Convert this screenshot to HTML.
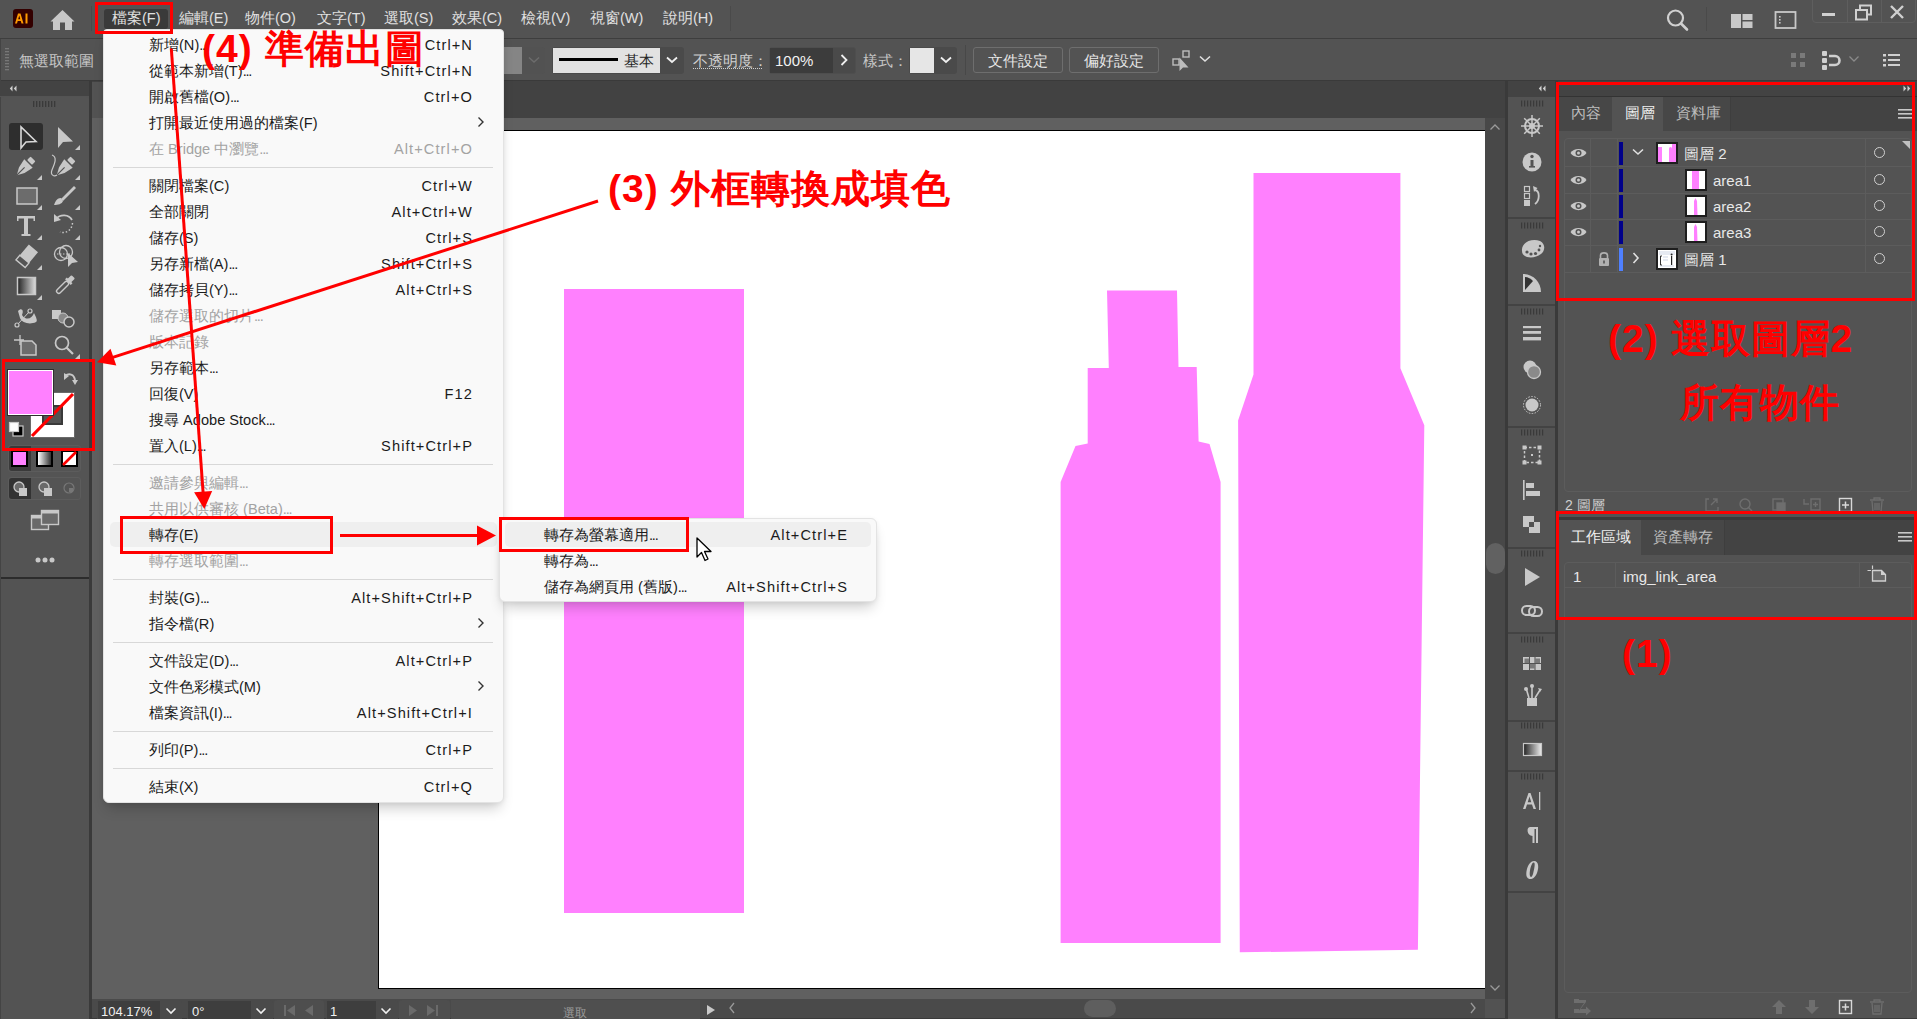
<!DOCTYPE html>
<html><head><meta charset="utf-8">
<style>
*{box-sizing:border-box;margin:0;padding:0}
html,body{width:1917px;height:1019px;overflow:hidden;background:#535353;font-family:"Liberation Sans",sans-serif;color:#d6d6d6}
.a{position:absolute}
.t{position:absolute;white-space:nowrap;line-height:1}
.an{font-size:39px;font-weight:bold;color:#ff0000;line-height:45px;letter-spacing:1px}
.mb{font-size:14.5px;top:10px;line-height:17px;color:#e0e0e0}
.cb{font-size:15px;top:52px;line-height:17px}
.tb{font-size:15px;line-height:17px}
.lr{font-size:15px;line-height:18px;color:#e8e8e8}
.sb{font-size:13px;top:1004px;line-height:16px}
.mi{font-size:14.6px;line-height:26px;letter-spacing:0}
</style></head><body>
<!-- ===== MENU BAR ===== -->
<div class="a" style="left:0;top:0;width:1917px;height:38px;background:#535353"></div>
<div class="a" style="left:0;top:38px;width:1917px;height:1px;background:#3e3e3e"></div>
<div class="a" style="left:13px;top:9px;width:20px;height:19px;background:#330000;border-radius:3px"></div>
<svg class="a" style="left:13px;top:9px" width="20" height="19" viewBox="0 0 20 19"><path d="M5 4.5 L7.5 4.5 L10.5 14.5 L8.5 14.5 L7.8 12 L4.7 12 L4 14.5 L2 14.5 Z M5.2 10.3 L7.3 10.3 L6.25 6.5 Z" fill="#ff9a00"/><rect x="12.5" y="4.5" width="2" height="10" fill="#ff9a00"/></svg>
<svg class="a" style="left:50px;top:9px" width="26" height="22" viewBox="0 0 26 22"><path d="M12.5 1 L24.5 12.5 L22 12.5 L22 21 L15 21 L15 13.5 L10 13.5 L10 21 L3 21 L3 12.5 L0.5 12.5 Z" fill="#c8c8c8"/></svg>
<div class="a" style="left:91px;top:6px;width:1px;height:25px;background:#4a4a4a"></div>
<div class="a" style="left:104px;top:9px;width:64px;height:20px;background:#3a3a3a;border-radius:3px"></div>
<div class="t mb" style="left:112px">檔案(F)</div>
<div class="t mb" style="left:179px">編輯(E)</div>
<div class="t mb" style="left:245px">物件(O)</div>
<div class="t mb" style="left:317px">文字(T)</div>
<div class="t mb" style="left:384px">選取(S)</div>
<div class="t mb" style="left:452px">效果(C)</div>
<div class="t mb" style="left:521px">檢視(V)</div>
<div class="t mb" style="left:590px">視窗(W)</div>
<div class="t mb" style="left:663px">說明(H)</div>
<div class="a" style="left:730px;top:6px;width:1px;height:25px;background:#4a4a4a"></div>
<!-- right icons -->
<svg class="a" style="left:1665px;top:8px" width="26" height="24" viewBox="0 0 26 24"><circle cx="10.5" cy="10" r="7.5" fill="none" stroke="#d0d0d0" stroke-width="2.2"/><line x1="16" y1="15.5" x2="22" y2="21.5" stroke="#d0d0d0" stroke-width="2.6" stroke-linecap="round"/></svg>
<div class="a" style="left:1706px;top:7px;width:1px;height:24px;background:#4a4a4a"></div>
<svg class="a" style="left:1730px;top:12px" width="26" height="18" viewBox="0 0 26 18"><rect x="1" y="2" width="10" height="14" fill="#c8c8c8"/><rect x="12.5" y="2" width="10" height="6" fill="#c8c8c8"/><rect x="12.5" y="9.5" width="10" height="6.5" fill="#c8c8c8"/></svg>
<svg class="a" style="left:1774px;top:10px" width="26" height="20" viewBox="0 0 26 20"><rect x="1.5" y="2" width="20" height="16" fill="none" stroke="#c8c8c8" stroke-width="1.8"/><rect x="5" y="6" width="1.6" height="1.6" fill="#c8c8c8"/><rect x="5" y="9" width="1.6" height="1.6" fill="#c8c8c8"/><rect x="5" y="12" width="1.6" height="1.6" fill="#c8c8c8"/></svg>
<div class="a" style="left:1812px;top:-2px;width:104px;height:25px;border:1px solid #5e5e5e;border-radius:0 0 4px 4px"></div>
<div class="a" style="left:1847px;top:0;width:1px;height:23px;background:#5e5e5e"></div>
<div class="a" style="left:1881px;top:0;width:1px;height:23px;background:#5e5e5e"></div>
<div class="a" style="left:1822px;top:13px;width:13px;height:3px;background:#d0d0d0"></div>
<svg class="a" style="left:1854px;top:4px" width="20" height="18" viewBox="0 0 20 18"><rect x="6" y="1.5" width="11" height="9" fill="none" stroke="#d0d0d0" stroke-width="2"/><rect x="2" y="6" width="11" height="9.5" fill="#535353" stroke="#d0d0d0" stroke-width="2"/></svg>
<svg class="a" style="left:1889px;top:5px" width="16" height="14" viewBox="0 0 16 14"><path d="M2 1 L14 13 M14 1 L2 13" stroke="#d0d0d0" stroke-width="2.4"/></svg>


<!-- ===== CONTROL BAR ===== -->
<div class="a" style="left:0;top:39px;width:1917px;height:42px;background:#535353"></div>
<div class="a" style="left:0;top:80px;width:1917px;height:1px;background:#3a3a3a"></div>
<svg class="a" style="left:4px;top:47px" width="6" height="26" viewBox="0 0 6 26"><g fill="#777"><rect x="1" y="1" width="4" height="1.3"/><rect x="1" y="4" width="4" height="1.3"/><rect x="1" y="7" width="4" height="1.3"/><rect x="1" y="10" width="4" height="1.3"/><rect x="1" y="13" width="4" height="1.3"/><rect x="1" y="16" width="4" height="1.3"/><rect x="1" y="19" width="4" height="1.3"/><rect x="1" y="22" width="4" height="1.3"/></g></svg>
<div class="t cb" style="left:19px;color:#c6c6c6">無選取範圍</div>
<div class="a" style="left:503px;top:47px;width:19px;height:27px;background:#858585"></div>
<div class="a" style="left:522px;top:47px;width:23px;height:27px;background:#525252;border-radius:0 3px 3px 0"></div>
<svg class="a" style="left:527px;top:55px" width="14" height="10" viewBox="0 0 14 10"><path d="M2 2.5 L7 7 L12 2.5" fill="none" stroke="#6c6c6c" stroke-width="1.5"/></svg>
<div class="a" style="left:552px;top:47px;width:132px;height:27px;background:#4a4a4a;border-radius:3px"></div>
<div class="a" style="left:553px;top:48px;width:107px;height:25px;background:#e2e2e2"></div>
<div class="a" style="left:559px;top:58px;width:59px;height:3px;background:#000"></div>
<div class="t cb" style="left:624px;color:#262626">基本</div>
<svg class="a" style="left:665px;top:55px" width="14" height="10" viewBox="0 0 14 10"><path d="M2 2.5 L7 7 L12 2.5" fill="none" stroke="#f0f0f0" stroke-width="1.8"/></svg>
<div class="t cb" style="left:693px;color:#d0d0d0">不透明度：</div>
<div class="a" style="left:693px;top:68px;width:69px;height:0;border-top:1px dotted #d0d0d0"></div>
<div class="a" style="left:769px;top:47px;width:87px;height:27px;background:#4a4a4a;border:1px solid #4e4e4e;border-radius:3px"></div>
<div class="a" style="left:770px;top:48px;width:63px;height:25px;background:#3c3c3c"></div>
<div class="t cb" style="left:775px;color:#f2f2f2">100%</div>
<svg class="a" style="left:838px;top:53px" width="12" height="14" viewBox="0 0 12 14"><path d="M3.5 2 L8.5 7 L3.5 12" fill="none" stroke="#f0f0f0" stroke-width="1.8"/></svg>
<div class="t cb" style="left:863px;color:#c6c6c6">樣式：</div>
<div class="a" style="left:909px;top:47px;width:48px;height:27px;background:#4a4a4a;border-radius:3px"></div>
<div class="a" style="left:910px;top:48px;width:24px;height:25px;background:#e6e6e6"></div>
<svg class="a" style="left:939px;top:55px" width="14" height="10" viewBox="0 0 14 10"><path d="M2 2.5 L7 7 L12 2.5" fill="none" stroke="#f0f0f0" stroke-width="1.8"/></svg>
<div class="a" style="left:965px;top:45px;width:1px;height:30px;background:#484848"></div>
<div class="a" style="left:973px;top:47px;width:90px;height:26px;border:1px solid #6e6e6e;border-radius:3px"></div>
<div class="t cb" style="left:988px;color:#e6e6e6">文件設定</div>
<div class="a" style="left:1069px;top:47px;width:90px;height:26px;border:1px solid #6e6e6e;border-radius:3px"></div>
<div class="t cb" style="left:1084px;color:#e6e6e6">偏好設定</div>
<svg class="a" style="left:1171px;top:49px" width="24" height="24" viewBox="0 0 24 24"><g fill="none" stroke="#bdbdbd" stroke-width="1.4"><rect x="2" y="10" width="6" height="6"/><rect x="12" y="2" width="6" height="6"/></g><path d="M8.5 8.5 L8.5 22 L12 18.5 L17.5 18.5 Z" fill="#bdbdbd"/></svg>
<svg class="a" style="left:1198px;top:54px" width="14" height="10" viewBox="0 0 14 10"><path d="M2 2.5 L7 7 L12 2.5" fill="none" stroke="#e0e0e0" stroke-width="1.6"/></svg>
<!-- right side -->
<svg class="a" style="left:1789px;top:51px" width="20" height="20" viewBox="0 0 20 20"><g fill="#7a7a7a"><rect x="2" y="2" width="5" height="5"/><rect x="11" y="2" width="5" height="5"/><rect x="2" y="11" width="5" height="5"/><rect x="11" y="11" width="5" height="5"/></g></svg>
<svg class="a" style="left:1821px;top:50px" width="24" height="22" viewBox="0 0 24 22"><g fill="#d0d0d0"><rect x="1" y="1" width="5" height="5" rx="1"/><rect x="1" y="8" width="5" height="5" rx="1"/><rect x="1" y="15" width="5" height="5" rx="1"/></g><path d="M8 6 L14 6 A4.5 4.5 0 0 1 14 15 L8 15" fill="none" stroke="#d0d0d0" stroke-width="2.6"/></svg>
<svg class="a" style="left:1848px;top:55px" width="12" height="8" viewBox="0 0 12 8"><path d="M1.5 1.5 L6 6 L10.5 1.5" fill="none" stroke="#8a8a8a" stroke-width="1.3"/></svg>
<svg class="a" style="left:1881px;top:52px" width="20" height="16" viewBox="0 0 20 16"><g fill="#d0d0d0"><rect x="2" y="2" width="3" height="2.5"/><rect x="7" y="2" width="12" height="2"/><rect x="2" y="7" width="3" height="2.5"/><rect x="7" y="7" width="12" height="2"/><rect x="2" y="12" width="3" height="2.5"/><rect x="7" y="12" width="12" height="2"/></g></svg>


<!-- ===== LEFT TOOLBAR ===== -->
<div class="a" style="left:0;top:81px;width:89px;height:938px;background:#535353"></div>
<div class="a" style="left:0;top:81px;width:89px;height:15px;background:#434343"></div>
<div class="a" style="left:89px;top:81px;width:3px;height:938px;background:#3a3a3a"></div>
<svg class="a" style="left:9px;top:85px" width="8" height="7" viewBox="0 0 8 7"><path d="M3.5 0.5 L0.8 3.5 L3.5 6.5 Z M7.5 0.5 L4.8 3.5 L7.5 6.5 Z" fill="#d0d0d0"/></svg>
<div class="a" style="left:1px;top:97px;width:88px;height:482px;background:#545454;border-radius:3px 3px 0 0;border-bottom:2px solid #2c2c2c"></div>
<div class="a" style="left:0;top:97px;width:1px;height:922px;background:#444"></div>
<svg class="a" style="left:32px;top:100px" width="26" height="8" viewBox="0 0 26 8"><g fill="#3a3a3a"><rect x="1" y="1" width="1.3" height="6"/><rect x="4" y="1" width="1.3" height="6"/><rect x="7" y="1" width="1.3" height="6"/><rect x="10" y="1" width="1.3" height="6"/><rect x="13" y="1" width="1.3" height="6"/><rect x="16" y="1" width="1.3" height="6"/><rect x="19" y="1" width="1.3" height="6"/><rect x="22" y="1" width="1.3" height="6"/></g></svg>
<div class="a" style="left:9px;top:123px;width:34px;height:27px;background:#2e2e2e;border-radius:3px"></div>
<svg class="a" style="left:0;top:115px" width="90" height="250" viewBox="0 0 90 250">
<g fill="#c8c8c8" stroke="none" transform="translate(0,-2)">
<!-- corner triangles -->
<path d="M80 32 L80 37 L75 37 Z"/><path d="M42 62 L42 67 L37 67 Z"/><path d="M80 62 L80 67 L75 67 Z"/>
<path d="M42 92 L42 97 L37 97 Z"/><path d="M80 92 L80 97 L75 97 Z"/><path d="M42 122 L42 127 L37 127 Z"/><path d="M80 122 L80 127 L75 127 Z"/>
<path d="M42 152 L42 157 L37 157 Z"/><path d="M42 182 L42 187 L37 187 Z"/><path d="M80 241 L80 246 L75 246 Z"/>
</g>
<!-- selection tool outline arrow -->
<path d="M21 12 L21 33 L26 27 L36 26.5 Z" fill="none" stroke="#d8d8d8" stroke-width="1.6" stroke-linejoin="miter"/>
<!-- direct selection filled -->
<path d="M58 12 L58 33 L63 27 L73 26.5 Z" fill="#c8c8c8"/>
<!-- pen -->
<g transform="translate(26,51) rotate(45)"><rect x="-3.5" y="-10" width="7" height="5" rx="1" fill="#c8c8c8"/><path d="M-6 -3.5 L6 -3.5 L4 6 L0 13 L-4 6 Z" fill="#c8c8c8"/><path d="M0 13 L0 2" stroke="#535353" stroke-width="1.2"/></g>
<!-- curvature pen -->
<g transform="translate(66,51) rotate(45)"><rect x="-3.5" y="-10" width="7" height="5" rx="1" fill="#c8c8c8"/><path d="M-6 -3.5 L6 -3.5 L4 6 L0 13 L-4 6 Z" fill="#c8c8c8"/><path d="M0 13 L0 2" stroke="#535353" stroke-width="1.2"/></g>
<path d="M52 40 C58 42 54 50 52 55 C50 60 54 62 57 60" fill="none" stroke="#c8c8c8" stroke-width="1.2"/>
<!-- rectangle -->
<rect x="17" y="73" width="20" height="16" fill="#6c6c6c" stroke="#c8c8c8" stroke-width="1.5"/>
<!-- brush -->
<path d="M74 71 L76 73 L63 86 L61 84 Z" fill="#c8c8c8"/><path d="M61 83 C56 83 55 88 54 90 C58 90 62 89 63 86 Z" fill="#c8c8c8"/>
<!-- type T -->
<path d="M17 101 L35 101 L35 106 L33.5 106 L33.5 103.5 L28 103.5 L28 119 L30.5 119 L30.5 121 L21.5 121 L21.5 119 L24 119 L24 103.5 L18.5 103.5 L18.5 106 L17 106 Z" fill="#c8c8c8"/>
<!-- rotate -->
<path d="M56 104 C60 99 69 99 72 105" fill="none" stroke="#c8c8c8" stroke-width="1.8"/><path d="M54 99 L54 107 L61 105 Z" fill="#c8c8c8"/>
<path d="M72.5 108 C72 115 66 119 60 117" fill="none" stroke="#c8c8c8" stroke-width="1.5" stroke-dasharray="1.5 2"/>
<!-- eraser -->
<g transform="translate(27,141) rotate(40)"><rect x="-6" y="-10" width="12" height="14" fill="#c8c8c8"/><rect x="-6" y="4" width="12" height="6" fill="none" stroke="#c8c8c8" stroke-width="1.4"/></g>
<!-- shape builder -->
<circle cx="61" cy="139" r="6.5" fill="none" stroke="#c8c8c8" stroke-width="1.3"/><circle cx="66" cy="137" r="6.5" fill="none" stroke="#c8c8c8" stroke-width="1.3"/><path d="M57 139 L70 139" stroke="#c8c8c8" stroke-width="1" stroke-dasharray="1.5 1.5"/><path d="M68 138 L68 152 L72 148 L78 147 Z" fill="#c8c8c8"/>
<!-- gradient -->
<defs><linearGradient id="gr" x1="0" x2="1"><stop offset="0" stop-color="#222"/><stop offset="1" stop-color="#ddd"/></linearGradient></defs>
<rect x="17.5" y="162.5" width="18" height="17" fill="url(#gr)" stroke="#c8c8c8" stroke-width="1.5"/>
<!-- eyedropper -->
<g transform="translate(64,171) rotate(45)"><rect x="-2.5" y="-13" width="5" height="6" rx="1" fill="#c8c8c8"/><rect x="-4" y="-8" width="8" height="2.5" fill="#c8c8c8"/><rect x="-2.2" y="-5.5" width="4.4" height="15" rx="2" fill="none" stroke="#c8c8c8" stroke-width="1.4"/></g>
<!-- puppet warp -->
<path d="M18 196 C22 192 24 196 22 200 C26 206 32 204 34 198 C36 202 38 206 36 207 C30 210 22 208 20 203 Z" fill="#c8c8c8"/><circle cx="17" cy="210" r="2" fill="none" stroke="#c8c8c8" stroke-width="1.2"/><circle cx="30" cy="196" r="2" fill="none" stroke="#c8c8c8" stroke-width="1.2"/><path d="M18 209 L29 197" stroke="#c8c8c8" stroke-width="1"/>
<!-- blend/symbols -->
<rect x="52" y="195" width="9" height="9" fill="#c8c8c8"/><circle cx="63" cy="203" r="5" fill="#8a8a8a" stroke="#c8c8c8" stroke-width="1"/><circle cx="69" cy="207" r="5" fill="#535353" stroke="#c8c8c8" stroke-width="1.5"/>
<!-- artboard -->
<path d="M14 225 L24 225 M20 220 L20 230" stroke="#c8c8c8" stroke-width="1.3"/><path d="M21 226 L32 226 L36 230 L36 240 L21 240 Z" fill="#6c6c6c" stroke="#c8c8c8" stroke-width="1.5"/>
<!-- zoom -->
<circle cx="62" cy="228" r="6.5" fill="none" stroke="#c8c8c8" stroke-width="1.7"/><path d="M66.5 232.5 L73 239" stroke="#c8c8c8" stroke-width="2.2"/>
</g>
</svg>
<!-- fill / stroke -->
<div class="a" style="left:30px;top:392px;width:45px;height:46px;background:#fff;border:1px solid #6a6a6a"></div>
<div class="a" style="left:42px;top:405px;width:21px;height:20px;background:#535353;border:2px solid #3a3a3a"></div>
<svg class="a" style="left:30px;top:392px" width="45" height="46" viewBox="0 0 45 46"><path d="M2 44 L43 2" stroke="#ff0000" stroke-width="3.2"/></svg>
<div class="a" style="left:8px;top:370px;width:45px;height:45px;background:#ff80ff;border:1px solid #fff;outline:1px solid #2e2e2e"></div>
<svg class="a" style="left:63px;top:371px" width="16" height="16" viewBox="0 0 16 16"><path d="M2 5 C6 2 11 3 12 9" fill="none" stroke="#c8c8c8" stroke-width="2"/><path d="M1 2 L1 9 L6 5 Z" fill="#c8c8c8"/><path d="M9 9 L15 9 L12 14 Z" fill="#c8c8c8"/></svg>
<svg class="a" style="left:8px;top:421px" width="17" height="17" viewBox="0 0 17 17"><rect x="5" y="5" width="10" height="10" fill="#000" stroke="#c8c8c8" stroke-width="1.2"/><rect x="1.5" y="1.5" width="9" height="9" fill="#fff" stroke="#c8c8c8" stroke-width="1.2"/></svg>
<div class="a" style="left:8px;top:445px;width:73px;height:27px;border:1px solid #5c5c5c;border-radius:3px"></div>
<div class="a" style="left:9px;top:446px;width:22px;height:25px;background:#3a3a3a;border-radius:3px 0 0 3px"></div>
<div class="a" style="left:11px;top:450px;width:17px;height:17px;background:#ff80ff;border:2px solid #000"></div>
<div class="a" style="left:36px;top:450px;width:17px;height:17px;background:linear-gradient(90deg,#fff,#333);border:2px solid #000"></div>
<div class="a" style="left:61px;top:450px;width:17px;height:17px;background:#fff;border:2px solid #000"></div>
<svg class="a" style="left:61px;top:450px" width="17" height="17" viewBox="0 0 17 17"><path d="M2 15 L15 2" stroke="#ff0000" stroke-width="2.6"/></svg>
<div class="a" style="left:8px;top:477px;width:73px;height:23px;border:1px solid #5c5c5c;border-radius:3px"></div>
<div class="a" style="left:9px;top:478px;width:22px;height:21px;background:#333;border-radius:3px 0 0 3px"></div>
<svg class="a" style="left:0;top:476px" width="90" height="26" viewBox="0 0 90 26">
<circle cx="19" cy="11" r="5" fill="#6a6a6a" stroke="#c8c8c8" stroke-width="1.3"/><rect x="19" y="12" width="8" height="8" fill="#c8c8c8"/>
<circle cx="44" cy="11" r="5" fill="#6a6a6a" stroke="#c8c8c8" stroke-width="1.3"/><rect x="44" y="12" width="8" height="8" fill="#c8c8c8"/>
<circle cx="69" cy="12" r="5" fill="none" stroke="#777" stroke-width="1.2"/><rect x="69" y="12" width="4" height="4" fill="#777"/>
</svg>
<svg class="a" style="left:30px;top:509px" width="30" height="24" viewBox="0 0 30 24"><rect x="1.5" y="6.5" width="17" height="14" fill="#6a6a6a" stroke="#c8c8c8" stroke-width="1.4"/><rect x="1.5" y="6.5" width="17" height="3" fill="#c8c8c8"/><rect x="11.5" y="1.5" width="17" height="14" fill="#6a6a6a" stroke="#c8c8c8" stroke-width="1.4"/><rect x="11.5" y="1.5" width="17" height="3" fill="#c8c8c8"/></svg>
<svg class="a" style="left:34px;top:556px" width="22" height="8" viewBox="0 0 22 8"><circle cx="4" cy="4" r="2.5" fill="#c8c8c8"/><circle cx="11" cy="4" r="2.5" fill="#c8c8c8"/><circle cx="18" cy="4" r="2.5" fill="#c8c8c8"/></svg>


<!-- ===== DOC AREA ===== -->
<div class="a" style="left:92px;top:81px;width:1413px;height:37px;background:#424242"></div>
<div class="a" style="left:92px;top:82px;width:30px;height:36px;background:#535353"></div>
<div class="a" style="left:0;top:39px;width:1px;height:42px;background:#444"></div>
<div class="a" style="left:92px;top:118px;width:1393px;height:881px;background:#606060"></div>
<div class="a" style="left:378px;top:130px;width:1108px;height:859px;background:#fff;border:1px solid #000;border-right:none"></div>
<svg class="a" style="left:0;top:0" width="1917" height="1019" viewBox="0 0 1917 1019">
<rect x="564" y="289" width="180" height="624" fill="#ff80fe"/>
<polygon fill="#ff80fe" points="1107,290.6 1177,290.6 1178.5,367 1196.7,367 1198.6,441.6 1209.5,444 1220.6,482 1220.6,943 1060.6,943 1060.6,482 1075.5,446 1087.7,443.5 1087.7,368 1108.8,368"/>
<polygon fill="#ff80fe" points="1253.5,173 1400.4,173 1400.4,368.2 1424.3,425.3 1417.9,949.8 1239.8,952.3 1238.1,420.6 1253.5,374.4"/>
</svg>

<!-- vertical scrollbar -->
<div class="a" style="left:1485px;top:118px;width:20px;height:881px;background:#484848"></div>
<!-- status bar -->
<div class="a" style="left:92px;top:999px;width:1413px;height:20px;background:#4a4a4a"></div>
<div class="a" style="left:1486px;top:543px;width:19px;height:31px;background:#616161;border-radius:10px"></div>
<svg class="a" style="left:1488px;top:122px" width="14" height="10" viewBox="0 0 14 10"><path d="M2.5 7.5 L7 3 L11.5 7.5" fill="none" stroke="#9a9a9a" stroke-width="1.3"/></svg>
<svg class="a" style="left:1488px;top:983px" width="14" height="10" viewBox="0 0 14 10"><path d="M2.5 2.5 L7 7 L11.5 2.5" fill="none" stroke="#9a9a9a" stroke-width="1.3"/></svg>
<div class="a" style="left:1485px;top:999px;width:20px;height:19px;background:#525252"></div>
<div class="a" style="left:92px;top:1018px;width:1413px;height:1px;background:#3a3a3a"></div>
<div class="a" style="left:97px;top:1000px;width:85px;height:19px;background:#4a4a4a;border-radius:3px 3px 0 0"></div>
<div class="a" style="left:98px;top:1001px;width:62px;height:18px;background:#3e3e3e"></div>
<div class="t sb" style="left:101px;color:#f0f0f0">104.17%</div>
<svg class="a" style="left:164px;top:1006px" width="14" height="10" viewBox="0 0 14 10"><path d="M2.5 2.5 L7 7 L11.5 2.5" fill="none" stroke="#f0f0f0" stroke-width="1.6"/></svg>
<div class="a" style="left:187px;top:1000px;width:86px;height:19px;background:#4a4a4a;border-radius:3px 3px 0 0"></div>
<div class="a" style="left:188px;top:1001px;width:63px;height:18px;background:#3e3e3e"></div>
<div class="t sb" style="left:192px;color:#f0f0f0">0°</div>
<svg class="a" style="left:254px;top:1006px" width="14" height="10" viewBox="0 0 14 10"><path d="M2.5 2.5 L7 7 L11.5 2.5" fill="none" stroke="#f0f0f0" stroke-width="1.6"/></svg>
<div class="a" style="left:274px;top:1000px;width:50px;height:19px;background:#4e4e4e;border-radius:3px 3px 0 0"></div>
<svg class="a" style="left:282px;top:1003px" width="40" height="14" viewBox="0 0 40 14"><g fill="#6a6a6a"><rect x="2" y="2" width="2" height="11"/><path d="M13 2 L5 7.5 L13 13 Z"/><path d="M31 2 L23 7.5 L31 13 Z"/></g></svg>
<div class="a" style="left:326px;top:1000px;width:72px;height:19px;background:#4a4a4a;border-radius:3px 3px 0 0"></div>
<div class="a" style="left:327px;top:1001px;width:49px;height:18px;background:#3e3e3e"></div>
<div class="t sb" style="left:330px;color:#f0f0f0">1</div>
<svg class="a" style="left:379px;top:1006px" width="14" height="10" viewBox="0 0 14 10"><path d="M2.5 2.5 L7 7 L11.5 2.5" fill="none" stroke="#f0f0f0" stroke-width="1.6"/></svg>
<div class="a" style="left:399px;top:1000px;width:51px;height:19px;background:#4e4e4e;border-radius:3px 3px 0 0"></div>
<svg class="a" style="left:406px;top:1003px" width="40" height="14" viewBox="0 0 40 14"><g fill="#6a6a6a"><path d="M3 2 L11 7.5 L3 13 Z"/><path d="M21 2 L29 7.5 L21 13 Z"/><rect x="30" y="2" width="2" height="11"/></g></svg>
<div class="a" style="left:451px;top:1000px;width:249px;height:19px;background:#4f4f4f"></div>
<div class="t sb" style="left:563px;color:#9a9a9a;font-size:12px;top:1005px">選取</div>
<svg class="a" style="left:704px;top:1003px" width="14" height="14" viewBox="0 0 14 14"><path d="M3 2 L11 7 L3 12 Z" fill="#c8c8c8"/></svg>
<svg class="a" style="left:726px;top:1001px" width="12" height="14" viewBox="0 0 12 14"><path d="M8 2 L4 7 L8 12" fill="none" stroke="#9a9a9a" stroke-width="1.3"/></svg>
<div class="a" style="left:1084px;top:1000px;width:32px;height:17px;background:#5e5e5e;border-radius:9px"></div>
<svg class="a" style="left:1467px;top:1001px" width="12" height="14" viewBox="0 0 12 14"><path d="M4 2 L8 7 L4 12" fill="none" stroke="#9a9a9a" stroke-width="1.3"/></svg>


<!-- ===== RIGHT ICON COLUMN ===== -->
<div class="a" style="left:1505px;top:81px;width:3px;height:938px;background:#3a3a3a"></div>
<div class="a" style="left:1508px;top:81px;width:48px;height:938px;background:#535353"></div>
<div class="a" style="left:1508px;top:81px;width:48px;height:16px;background:#434343"></div>


<!-- ===== RIGHT PANELS ===== -->
<div class="a" style="left:1556px;top:81px;width:361px;height:938px;background:#535353"></div>
<div class="a" style="left:1556px;top:81px;width:361px;height:16px;background:#434343"></div>
<svg class="a" style="left:1538px;top:85px" width="8" height="7" viewBox="0 0 8 7"><path d="M3.5 0.5 L0.8 3.5 L3.5 6.5 Z M7.5 0.5 L4.8 3.5 L7.5 6.5 Z" fill="#d0d0d0"/></svg>
<div class="a" style="left:1508px;top:97px;width:47px;height:795px;background:#535353"></div>
<div class="a" style="left:1508px;top:217px;width:47px;height:2px;background:#434343"></div>
<div class="a" style="left:1508px;top:304px;width:47px;height:2px;background:#434343"></div>
<div class="a" style="left:1508px;top:426px;width:47px;height:2px;background:#434343"></div>
<div class="a" style="left:1508px;top:547px;width:47px;height:2px;background:#434343"></div>
<div class="a" style="left:1508px;top:632px;width:47px;height:2px;background:#434343"></div>
<div class="a" style="left:1508px;top:720px;width:47px;height:2px;background:#434343"></div>
<div class="a" style="left:1508px;top:770px;width:47px;height:2px;background:#434343"></div>
<div class="a" style="left:1508px;top:891px;width:47px;height:2px;background:#434343"></div>
<svg class="a" style="left:1520px;top:100px" width="24" height="7" viewBox="0 0 24 7"><g fill="#3a3a3a"><rect x="1" y="0.5" width="1.2" height="6"/><rect x="4" y="0.5" width="1.2" height="6"/><rect x="7" y="0.5" width="1.2" height="6"/><rect x="10" y="0.5" width="1.2" height="6"/><rect x="13" y="0.5" width="1.2" height="6"/><rect x="16" y="0.5" width="1.2" height="6"/><rect x="19" y="0.5" width="1.2" height="6"/><rect x="22" y="0.5" width="1.2" height="6"/></g></svg>
<svg class="a" style="left:1520px;top:222px" width="24" height="7" viewBox="0 0 24 7"><g fill="#3a3a3a"><rect x="1" y="0.5" width="1.2" height="6"/><rect x="4" y="0.5" width="1.2" height="6"/><rect x="7" y="0.5" width="1.2" height="6"/><rect x="10" y="0.5" width="1.2" height="6"/><rect x="13" y="0.5" width="1.2" height="6"/><rect x="16" y="0.5" width="1.2" height="6"/><rect x="19" y="0.5" width="1.2" height="6"/><rect x="22" y="0.5" width="1.2" height="6"/></g></svg>
<svg class="a" style="left:1520px;top:308px" width="24" height="7" viewBox="0 0 24 7"><g fill="#3a3a3a"><rect x="1" y="0.5" width="1.2" height="6"/><rect x="4" y="0.5" width="1.2" height="6"/><rect x="7" y="0.5" width="1.2" height="6"/><rect x="10" y="0.5" width="1.2" height="6"/><rect x="13" y="0.5" width="1.2" height="6"/><rect x="16" y="0.5" width="1.2" height="6"/><rect x="19" y="0.5" width="1.2" height="6"/><rect x="22" y="0.5" width="1.2" height="6"/></g></svg>
<svg class="a" style="left:1520px;top:429px" width="24" height="7" viewBox="0 0 24 7"><g fill="#3a3a3a"><rect x="1" y="0.5" width="1.2" height="6"/><rect x="4" y="0.5" width="1.2" height="6"/><rect x="7" y="0.5" width="1.2" height="6"/><rect x="10" y="0.5" width="1.2" height="6"/><rect x="13" y="0.5" width="1.2" height="6"/><rect x="16" y="0.5" width="1.2" height="6"/><rect x="19" y="0.5" width="1.2" height="6"/><rect x="22" y="0.5" width="1.2" height="6"/></g></svg>
<svg class="a" style="left:1520px;top:550px" width="24" height="7" viewBox="0 0 24 7"><g fill="#3a3a3a"><rect x="1" y="0.5" width="1.2" height="6"/><rect x="4" y="0.5" width="1.2" height="6"/><rect x="7" y="0.5" width="1.2" height="6"/><rect x="10" y="0.5" width="1.2" height="6"/><rect x="13" y="0.5" width="1.2" height="6"/><rect x="16" y="0.5" width="1.2" height="6"/><rect x="19" y="0.5" width="1.2" height="6"/><rect x="22" y="0.5" width="1.2" height="6"/></g></svg>
<svg class="a" style="left:1520px;top:636px" width="24" height="7" viewBox="0 0 24 7"><g fill="#3a3a3a"><rect x="1" y="0.5" width="1.2" height="6"/><rect x="4" y="0.5" width="1.2" height="6"/><rect x="7" y="0.5" width="1.2" height="6"/><rect x="10" y="0.5" width="1.2" height="6"/><rect x="13" y="0.5" width="1.2" height="6"/><rect x="16" y="0.5" width="1.2" height="6"/><rect x="19" y="0.5" width="1.2" height="6"/><rect x="22" y="0.5" width="1.2" height="6"/></g></svg>
<svg class="a" style="left:1520px;top:722px" width="24" height="7" viewBox="0 0 24 7"><g fill="#3a3a3a"><rect x="1" y="0.5" width="1.2" height="6"/><rect x="4" y="0.5" width="1.2" height="6"/><rect x="7" y="0.5" width="1.2" height="6"/><rect x="10" y="0.5" width="1.2" height="6"/><rect x="13" y="0.5" width="1.2" height="6"/><rect x="16" y="0.5" width="1.2" height="6"/><rect x="19" y="0.5" width="1.2" height="6"/><rect x="22" y="0.5" width="1.2" height="6"/></g></svg>
<svg class="a" style="left:1520px;top:773px" width="24" height="7" viewBox="0 0 24 7"><g fill="#3a3a3a"><rect x="1" y="0.5" width="1.2" height="6"/><rect x="4" y="0.5" width="1.2" height="6"/><rect x="7" y="0.5" width="1.2" height="6"/><rect x="10" y="0.5" width="1.2" height="6"/><rect x="13" y="0.5" width="1.2" height="6"/><rect x="16" y="0.5" width="1.2" height="6"/><rect x="19" y="0.5" width="1.2" height="6"/><rect x="22" y="0.5" width="1.2" height="6"/></g></svg>
<svg class="a" style="left:1508px;top:97px" width="47" height="795" viewBox="0 97 47 795">
<g fill="#c8c8c8" stroke="#c8c8c8">
<!-- helm 126 -->
<g transform="translate(24,126)" fill="none" stroke-width="2"><circle r="7"/><circle r="2" fill="#c8c8c8"/><path d="M0 -11 L0 11 M-11 0 L11 0 M-7.8 -7.8 L7.8 7.8 M-7.8 7.8 L7.8 -7.8" stroke-width="1.5"/></g>
<!-- info 162 -->
<circle cx="24" cy="162" r="9.5" stroke="none"/><rect x="22.5" y="160" width="3" height="7" fill="#535353" stroke="none"/><circle cx="24" cy="156.5" r="1.7" fill="#535353" stroke="none"/><rect x="21" y="166" width="6" height="1.6" fill="#535353" stroke="none"/>
<!-- history 196 -->
<g stroke-width="1.2" fill="none"><rect x="16.5" y="186.5" width="5" height="5"/><rect x="16.5" y="193.5" width="5" height="5"/></g><rect x="16" y="200" width="6" height="6" stroke="none"/>
<path d="M27 190 C32 191 32 200 27 204" fill="none" stroke-width="1.8"/><path d="M25 186 L29.5 188 L26 192 Z" stroke="none"/>
<!-- palette 249 -->
<path d="M14 251 C13 242 24 238 32 241 C38 244 37 251 33 254 C29 257 24 258 19 257 C16 256 14 254 14 251 Z" stroke="none"/>
<g fill="#535353" stroke="none"><circle cx="19" cy="252" r="1.6"/><circle cx="23" cy="254" r="1.6"/><circle cx="27.5" cy="253.5" r="1.6"/><circle cx="31" cy="250" r="1.4"/><circle cx="32" cy="246" r="1.2"/></g>
<!-- color guide 283 -->
<path d="M15 274 L15 292 L33 292 C33 282 25 274 15 274 Z" stroke="none"/>
<path d="M17 290 L17 277 C20 277 23 279 25 281 Z" fill="#333" stroke="none"/>
<!-- stroke 333 -->
<g stroke="none"><rect x="15" y="326" width="18" height="2.2"/><rect x="15" y="331" width="18" height="2.8"/><rect x="15" y="337" width="18" height="3.4"/></g>
<!-- transparency 370 -->
<circle cx="22" cy="367" r="6.5" stroke="none"/><circle cx="26" cy="372" r="6.5" fill="#8a8a8a" stroke="#c8c8c8" stroke-width="1.3"/>
<!-- appearance 405 -->
<circle cx="24" cy="405" r="8.5" fill="none" stroke-width="1" stroke-dasharray="1.6 1.4"/><circle cx="24" cy="405" r="6.5" stroke="none"/>
<!-- transform 455 -->
<rect x="16.5" y="447.5" width="15" height="15" fill="none" stroke-width="1.5" stroke-dasharray="2.5 2"/><g stroke="none"><rect x="14.5" y="445.5" width="4" height="4"/><rect x="29.5" y="445.5" width="4" height="4"/><rect x="14.5" y="460.5" width="4" height="4"/><rect x="29.5" y="460.5" width="4" height="4"/><rect x="23" y="454" width="2" height="2"/></g>
<!-- align 490 -->
<g stroke="none"><rect x="15" y="480" width="1.6" height="20"/><rect x="18" y="483" width="8" height="5"/><rect x="18" y="491" width="14" height="5"/></g>
<!-- pathfinder 525 -->
<g stroke="none"><rect x="15" y="516" width="11" height="11"/><rect x="21" y="522" width="11" height="11"/></g><rect x="21" y="522" width="5" height="5" fill="#535353" stroke="none"/>
<!-- play 577 -->
<path d="M17 568 L32 577 L17 586 Z" stroke="none"/>
<!-- link 611 -->
<g fill="none" stroke-width="2"><rect x="14" y="606" width="13" height="9" rx="4.5"/><rect x="21" y="607" width="13" height="9" rx="4.5"/></g>
<!-- swatches 663 -->
<g stroke="none"><rect x="15" y="657" width="18" height="13"/></g><g fill="#7a7a7a" stroke="none"><rect x="16.5" y="658.5" width="4.5" height="4.5"/><rect x="22" y="664" width="4.5" height="4.5"/><rect x="27.5" y="658.5" width="4.5" height="4.5"/></g><path d="M15 663.5 L33 663.5 M21.5 657 L21.5 670 M27 657 L27 670" stroke="#535353" stroke-width="1"/>
<!-- brushes 698 -->
<rect x="19" y="698" width="10" height="8" stroke="none"/><path d="M21 698 L18 688 M24 698 L24 685 M27 698 L32 690" stroke-width="1.6"/><circle cx="18" cy="689" r="2" stroke="none"/><circle cx="24" cy="686" r="2" stroke="none"/><path d="M30 688 L34 689 L32 692 Z" stroke="none"/>
<!-- gradient 749 -->
<defs><linearGradient id="g2" x1="0" x2="1"><stop offset="0" stop-color="#222"/><stop offset="1" stop-color="#eee"/></linearGradient></defs>
<rect x="15.5" y="743.5" width="18" height="12" fill="url(#g2)" stroke-width="1.2"/>
<!-- A| 801 -->
<path d="M15 809 L20.5 793 L22.5 793 L28 809 L25.5 809 L24 804.5 L19 804.5 L17.5 809 Z M19.7 802.3 L23.3 802.3 L21.5 796.5 Z" stroke="none"/><rect x="31" y="792" width="1.3" height="18" stroke="none"/>
<!-- pilcrow 835 -->
<path d="M22 827 L30 827 L30 843 L28 843 L28 829 L26.5 829 L26.5 843 L24.5 843 L24.5 836 C19 836 18 827 22 827 Z" stroke="none"/>
<!-- O italic 870 -->
<path d="M26 861 C31 861 31 868 29 873 C27 879 21 881 19 877 C17 873 20 861 26 861 Z M25.5 862.5 C23 863 21 873 22 876 C23 878 24 877 25 874 C26 870 28 862 25.5 862.5 Z" fill-rule="evenodd" stroke="none"/>
</g></svg>
<div class="a" style="left:1555px;top:81px;width:3px;height:938px;background:#3a3a3a"></div>
<svg class="a" style="left:1903px;top:85px" width="8" height="7" viewBox="0 0 8 7"><path d="M0.5 0.5 L3.2 3.5 L0.5 6.5 Z M4.5 0.5 L7.2 3.5 L4.5 6.5 Z" fill="#d0d0d0"/></svg>
<div class="a" style="left:1558px;top:96px;width:359px;height:1px;background:#333"></div>
<div class="a" style="left:1558px;top:97px;width:359px;height:34px;background:#434343"></div>
<div class="a" style="left:1558px;top:97px;width:54px;height:34px;background:#474747"></div>
<div class="a" style="left:1612px;top:97px;width:51px;height:34px;background:#535353"></div>
<div class="a" style="left:1663px;top:97px;width:68px;height:34px;background:#474747;border-right:1px solid #3e3e3e"></div>
<div class="t tb" style="left:1571px;top:104px;color:#bdbdbd">內容</div>
<div class="t tb" style="left:1625px;top:104px;color:#f0f0f0">圖層</div>
<div class="t tb" style="left:1676px;top:104px;color:#bdbdbd">資料庫</div>
<svg class="a" style="left:1897px;top:107px" width="16" height="14" viewBox="0 0 16 14"><g fill="#c8c8c8"><rect x="1" y="2" width="14" height="1.6"/><rect x="1" y="6" width="14" height="1.6"/><rect x="1" y="10" width="14" height="1.6"/></g></svg>
<div class="a" style="left:1558px;top:131px;width:359px;height:386px;background:#535353"></div>
<div class="a" style="left:1564px;top:138px;width:348px;height:354px;border:1px solid #5c5c5c;border-radius:4px"></div>
<div class="a" style="left:1565px;top:166px;width:346px;height:1px;background:#5c5c5c"></div>
<div class="a" style="left:1590px;top:139px;width:1px;height:27px;background:#5c5c5c"></div>
<div class="a" style="left:1617px;top:139px;width:1px;height:27px;background:#5c5c5c"></div>
<div class="a" style="left:1865px;top:139px;width:1px;height:27px;background:#5c5c5c"></div>
<div class="a" style="left:1619px;top:142px;width:4px;height:23px;background:#00008b"></div>
<svg class="a" style="left:1570px;top:147px" width="17" height="12" viewBox="0 0 17 12"><path d="M0.5 6 C3.5 0.5 13.5 0.5 16.5 6 C13.5 11.5 3.5 11.5 0.5 6 Z" fill="#c8c8c8"/><circle cx="8.5" cy="6" r="3" fill="#535353"/><circle cx="8.5" cy="6" r="1.5" fill="#c8c8c8"/></svg>
<svg class="a" style="left:1631px;top:147px" width="14" height="10" viewBox="0 0 14 10"><path d="M2 2.5 L7 7 L12 2.5" fill="none" stroke="#e0e0e0" stroke-width="1.6"/></svg>
<div class="a" style="left:1656px;top:142px;width:22px;height:22px;background:#fff;border:2px solid #1e1e1e"></div>
<div class="a" style="left:1658px;top:147px;width:4px;height:15px;background:#ff80ff"></div><div class="a" style="left:1669px;top:147px;width:3px;height:15px;background:#ff80ff;border-radius:2px 2px 0 0"></div><div class="a" style="left:1672px;top:144px;width:4px;height:18px;background:#ff80ff"></div>
<div class="t lr" style="left:1684px;top:145px">圖層 2</div>
<div class="a" style="left:1874px;top:147px;width:11px;height:11px;border:1.5px solid #d0d0d0;border-radius:50%"></div>
<div class="a" style="left:1565px;top:193px;width:346px;height:1px;background:#5c5c5c"></div>
<div class="a" style="left:1590px;top:166px;width:1px;height:27px;background:#5c5c5c"></div>
<div class="a" style="left:1617px;top:166px;width:1px;height:27px;background:#5c5c5c"></div>
<div class="a" style="left:1865px;top:166px;width:1px;height:27px;background:#5c5c5c"></div>
<div class="a" style="left:1619px;top:169px;width:4px;height:23px;background:#00008b"></div>
<svg class="a" style="left:1570px;top:174px" width="17" height="12" viewBox="0 0 17 12"><path d="M0.5 6 C3.5 0.5 13.5 0.5 16.5 6 C13.5 11.5 3.5 11.5 0.5 6 Z" fill="#c8c8c8"/><circle cx="8.5" cy="6" r="3" fill="#535353"/><circle cx="8.5" cy="6" r="1.5" fill="#c8c8c8"/></svg>
<div class="a" style="left:1685px;top:169px;width:22px;height:22px;background:#fff;border:2px solid #1e1e1e"></div>
<div class="a" style="left:1692px;top:171px;width:7px;height:18px;background:#ff80ff"></div>
<div class="t lr" style="left:1713px;top:172px">area1</div>
<div class="a" style="left:1874px;top:174px;width:11px;height:11px;border:1.5px solid #d0d0d0;border-radius:50%"></div>
<div class="a" style="left:1565px;top:219px;width:346px;height:1px;background:#5c5c5c"></div>
<div class="a" style="left:1590px;top:192px;width:1px;height:27px;background:#5c5c5c"></div>
<div class="a" style="left:1617px;top:192px;width:1px;height:27px;background:#5c5c5c"></div>
<div class="a" style="left:1865px;top:192px;width:1px;height:27px;background:#5c5c5c"></div>
<div class="a" style="left:1619px;top:195px;width:4px;height:23px;background:#00008b"></div>
<svg class="a" style="left:1570px;top:200px" width="17" height="12" viewBox="0 0 17 12"><path d="M0.5 6 C3.5 0.5 13.5 0.5 16.5 6 C13.5 11.5 3.5 11.5 0.5 6 Z" fill="#c8c8c8"/><circle cx="8.5" cy="6" r="3" fill="#535353"/><circle cx="8.5" cy="6" r="1.5" fill="#c8c8c8"/></svg>
<div class="a" style="left:1685px;top:195px;width:22px;height:22px;background:#fff;border:2px solid #1e1e1e"></div>
<svg class="a" style="left:1687px;top:197px" width="18" height="18" viewBox="0 0 18 18"><path d="M7 18 L7 4 L8.5 1 L10 4 L10.5 18 Z" fill="#ff80ff"/></svg>
<div class="t lr" style="left:1713px;top:198px">area2</div>
<div class="a" style="left:1874px;top:200px;width:11px;height:11px;border:1.5px solid #d0d0d0;border-radius:50%"></div>
<div class="a" style="left:1565px;top:245px;width:346px;height:1px;background:#5c5c5c"></div>
<div class="a" style="left:1590px;top:218px;width:1px;height:27px;background:#5c5c5c"></div>
<div class="a" style="left:1617px;top:218px;width:1px;height:27px;background:#5c5c5c"></div>
<div class="a" style="left:1865px;top:218px;width:1px;height:27px;background:#5c5c5c"></div>
<div class="a" style="left:1619px;top:221px;width:4px;height:23px;background:#00008b"></div>
<svg class="a" style="left:1570px;top:226px" width="17" height="12" viewBox="0 0 17 12"><path d="M0.5 6 C3.5 0.5 13.5 0.5 16.5 6 C13.5 11.5 3.5 11.5 0.5 6 Z" fill="#c8c8c8"/><circle cx="8.5" cy="6" r="3" fill="#535353"/><circle cx="8.5" cy="6" r="1.5" fill="#c8c8c8"/></svg>
<div class="a" style="left:1685px;top:221px;width:22px;height:22px;background:#fff;border:2px solid #1e1e1e"></div>
<svg class="a" style="left:1687px;top:223px" width="18" height="18" viewBox="0 0 18 18"><path d="M7 18 L7 4 L8.5 1 L10 4 L10.5 18 Z" fill="#ff80ff"/></svg>
<div class="t lr" style="left:1713px;top:224px">area3</div>
<div class="a" style="left:1874px;top:226px;width:11px;height:11px;border:1.5px solid #d0d0d0;border-radius:50%"></div>
<div class="a" style="left:1565px;top:272px;width:346px;height:1px;background:#5c5c5c"></div>
<div class="a" style="left:1590px;top:245px;width:1px;height:27px;background:#5c5c5c"></div>
<div class="a" style="left:1617px;top:245px;width:1px;height:27px;background:#5c5c5c"></div>
<div class="a" style="left:1865px;top:245px;width:1px;height:27px;background:#5c5c5c"></div>
<div class="a" style="left:1619px;top:248px;width:4px;height:23px;background:#4f80ff"></div>
<svg class="a" style="left:1597px;top:251px" width="14" height="16" viewBox="0 0 14 16"><path d="M3.5 7 L3.5 4.5 C3.5 1 10.5 1 10.5 4.5 L10.5 7" fill="none" stroke="#b0b0b0" stroke-width="1.6"/><rect x="2" y="7" width="10" height="8" rx="1" fill="#b0b0b0"/><rect x="6.2" y="9.5" width="1.6" height="3" fill="#535353"/></svg>
<svg class="a" style="left:1631px;top:251px" width="10" height="14" viewBox="0 0 10 14"><path d="M2.5 2 L7 7 L2.5 12" fill="none" stroke="#e0e0e0" stroke-width="1.6"/></svg>
<div class="a" style="left:1656px;top:248px;width:22px;height:22px;background:#fff;border:2px solid #1e1e1e"></div>
<svg class="a" style="left:1658px;top:250px" width="18" height="18" viewBox="0 0 18 18"><g fill="none" stroke="#c0cade" stroke-width="0.8"><path d="M1 2 L17 2 M1 4 L17 4 M5 7 L10 7 M5 10 L10 10 M2 16 L16 16"/></g><path d="M4 6 L2.5 6 L2.5 15 L4 15" fill="none" stroke="#333" stroke-width="1"/><rect x="13" y="6" width="1.2" height="9" fill="#222"/><circle cx="13.6" cy="4.5" r="1" fill="#222"/></svg>
<div class="t lr" style="left:1684px;top:251px">圖層 1</div>
<div class="a" style="left:1874px;top:253px;width:11px;height:11px;border:1.5px solid #d0d0d0;border-radius:50%"></div>
<svg class="a" style="left:1901px;top:140px" width="10" height="10" viewBox="0 0 10 10"><path d="M1 1 L9 1 L9 9 Z" fill="#c0c0c0"/></svg>
<div class="t" style="left:1565px;top:497px;font-size:14px;line-height:16px;color:#d0d0d0">2 圖層</div>
<svg class="a" style="left:1700px;top:495px" width="200" height="20" viewBox="0 0 200 20"><g fill="none" stroke="#6e6e6e" stroke-width="1.4">
<path d="M9 4 L6 4 L6 16 L18 16 L18 12 M11 10 L17 4 M13 4 L17 4 L17 8"/>
<circle cx="45" cy="9" r="5"/><path d="M48.5 12.5 L52 16"/>
<rect x="73" y="4" width="10" height="11"/><rect x="77" y="8" width="8" height="8" fill="#6e6e6e"/>
<path d="M104 4 L104 9 L109 9 M111 4 L120 4 L120 15 L111 15 Z M115.5 7 L115.5 12 M113 9.5 L118 9.5"/>
</g>
<rect x="139.5" y="3.5" width="12" height="13" fill="none" stroke="#d8d8d8" stroke-width="1.4"/><path d="M145.5 6.5 L145.5 13.5 M142 10 L149 10" stroke="#d8d8d8" stroke-width="1.5"/>
<g fill="none" stroke="#6e6e6e" stroke-width="1.3"><path d="M170 5 L184 5 M174 5 L174 3 L180 3 L180 5 M172 6 L173 17 L181 17 L182 6 M175 8 L175 15 M177 8 L177 15 M179 8 L179 15"/></g>
</svg>
<div class="a" style="left:1558px;top:517px;width:359px;height:3px;background:#3a3a3a"></div>
<div class="a" style="left:1558px;top:520px;width:359px;height:35px;background:#434343"></div>
<div class="a" style="left:1558px;top:520px;width:83px;height:35px;background:#535353"></div>
<div class="a" style="left:1641px;top:520px;width:84px;height:35px;background:#474747;border-right:1px solid #3e3e3e"></div>
<div class="t tb" style="left:1571px;top:528px;color:#f0f0f0">工作區域</div>
<div class="t tb" style="left:1653px;top:528px;color:#bdbdbd">資產轉存</div>
<svg class="a" style="left:1897px;top:530px" width="16" height="14" viewBox="0 0 16 14"><g fill="#c8c8c8"><rect x="1" y="2" width="14" height="1.6"/><rect x="1" y="6" width="14" height="1.6"/><rect x="1" y="10" width="14" height="1.6"/></g></svg>
<div class="a" style="left:1558px;top:555px;width:359px;height:464px;background:#535353"></div>
<div class="a" style="left:1564px;top:562px;width:348px;height:431px;border:1px solid #5c5c5c;border-radius:4px"></div>
<div class="a" style="left:1565px;top:587px;width:346px;height:1px;background:#5c5c5c"></div>
<div class="a" style="left:1615px;top:563px;width:1px;height:24px;background:#5c5c5c"></div>
<div class="a" style="left:1859px;top:563px;width:1px;height:24px;background:#5c5c5c"></div>
<div class="t lr" style="left:1573px;top:568px">1</div>
<div class="t lr" style="left:1623px;top:568px">img_link_area</div>
<svg class="a" style="left:1866px;top:564px" width="22" height="19" viewBox="0 0 22 19"><path d="M6.5 6.5 L15.5 6.5 L19.5 10.5 L19.5 17 L6.5 17 Z" fill="#6a6a6a" stroke="#d0d0d0" stroke-width="1.3"/><path d="M15 6 L20 11 L15 11 Z" fill="#d0d0d0"/><path d="M1.5 6.5 L5 6.5 M6.5 1.5 L6.5 5" stroke="#d0d0d0" stroke-width="1.2"/></svg>
<div class="a" style="left:1558px;top:1018px;width:359px;height:1px;background:#3a3a3a"></div>
<svg class="a" style="left:1570px;top:997px" width="320" height="22" viewBox="0 0 320 22">
<g fill="#6e6e6e"><rect x="4" y="2" width="5" height="4"/><rect x="4" y="12" width="5" height="4"/><path d="M9 3 L16 3 L16 5 L10.5 12 L16 12 L16 9.5 L21 14 L16 18.5 L16 16 L9 16 L9 13.5 L14 6 L9 6 Z"/></g>
<g fill="#6e6e6e"><path d="M209 3 L216 10 L212 10 L212 17 L206 17 L206 10 L202 10 Z"/><path d="M242 17 L249 10 L245 10 L245 3 L239 3 L239 10 L235 10 Z"/></g>
<rect x="269.5" y="3.5" width="12" height="13" fill="none" stroke="#d8d8d8" stroke-width="1.4"/><path d="M275.5 6.5 L275.5 13.5 M272 10 L279 10" stroke="#d8d8d8" stroke-width="1.5"/>
<g fill="none" stroke="#6e6e6e" stroke-width="1.3"><path d="M300 5 L314 5 M304 5 L304 3 L310 3 L310 5 M302 6 L303 17 L311 17 L312 6 M305 8 L305 15 M307 8 L307 15 M309 8 L309 15"/></g>
</svg>

<!-- ===== MENUS ===== -->
<div class="a" style="left:103px;top:29px;width:401px;height:774px;background:#f9f9f9;border:1px solid #e3e3e3;border-radius:4px 4px 6px 6px;box-shadow:0 9px 14px -4px rgba(0,0,0,.2),0 1px 5px rgba(0,0,0,.06);"></div>
<div class="t mi" style="left:149px;top:32px;color:#1b1b1b">新增(N)<span style="letter-spacing:-1.2px">...</span></div>
<div class="t mi" style="right:1444px;top:32px;color:#1b1b1b;letter-spacing:1.1px">Ctrl+N</div>
<div class="t mi" style="left:149px;top:58px;color:#1b1b1b">從範本新增(T)<span style="letter-spacing:-1.2px">...</span></div>
<div class="t mi" style="right:1444px;top:58px;color:#1b1b1b;letter-spacing:1.1px">Shift+Ctrl+N</div>
<div class="t mi" style="left:149px;top:84px;color:#1b1b1b">開啟舊檔(O)<span style="letter-spacing:-1.2px">...</span></div>
<div class="t mi" style="right:1444px;top:84px;color:#1b1b1b;letter-spacing:1.1px">Ctrl+O</div>
<div class="t mi" style="left:149px;top:110px;color:#1b1b1b">打開最近使用過的檔案(F)</div>
<svg class="a" style="left:477px;top:116px" width="8" height="12" viewBox="0 0 8 12"><path d="M1.5 1.5 L6 6 L1.5 10.5" fill="none" stroke="#333" stroke-width="1.4"/></svg>
<div class="t mi" style="left:149px;top:136px;color:#a3a3a3">在 Bridge 中瀏覽<span style="letter-spacing:-1.2px">...</span></div>
<div class="t mi" style="right:1444px;top:136px;color:#a3a3a3;letter-spacing:1.1px">Alt+Ctrl+O</div>
<div class="a" style="left:113px;top:167px;width:380px;height:1px;background:#d8d8d8"></div>
<div class="t mi" style="left:149px;top:173px;color:#1b1b1b">關閉檔案(C)</div>
<div class="t mi" style="right:1444px;top:173px;color:#1b1b1b;letter-spacing:1.1px">Ctrl+W</div>
<div class="t mi" style="left:149px;top:199px;color:#1b1b1b">全部關閉</div>
<div class="t mi" style="right:1444px;top:199px;color:#1b1b1b;letter-spacing:1.1px">Alt+Ctrl+W</div>
<div class="t mi" style="left:149px;top:225px;color:#1b1b1b">儲存(S)</div>
<div class="t mi" style="right:1444px;top:225px;color:#1b1b1b;letter-spacing:1.1px">Ctrl+S</div>
<div class="t mi" style="left:149px;top:251px;color:#1b1b1b">另存新檔(A)<span style="letter-spacing:-1.2px">...</span></div>
<div class="t mi" style="right:1444px;top:251px;color:#1b1b1b;letter-spacing:1.1px">Shift+Ctrl+S</div>
<div class="t mi" style="left:149px;top:277px;color:#1b1b1b">儲存拷貝(Y)<span style="letter-spacing:-1.2px">...</span></div>
<div class="t mi" style="right:1444px;top:277px;color:#1b1b1b;letter-spacing:1.1px">Alt+Ctrl+S</div>
<div class="t mi" style="left:149px;top:303px;color:#a3a3a3">儲存選取的切片<span style="letter-spacing:-1.2px">...</span></div>
<div class="t mi" style="left:149px;top:329px;color:#a3a3a3">版本記錄</div>
<div class="t mi" style="left:149px;top:355px;color:#1b1b1b">另存範本<span style="letter-spacing:-1.2px">...</span></div>
<div class="t mi" style="left:149px;top:381px;color:#1b1b1b">回復(V)</div>
<div class="t mi" style="right:1444px;top:381px;color:#1b1b1b;letter-spacing:1.1px">F12</div>
<div class="t mi" style="left:149px;top:407px;color:#1b1b1b">搜尋 Adobe Stock<span style="letter-spacing:-1.2px">...</span></div>
<div class="t mi" style="left:149px;top:433px;color:#1b1b1b">置入(L)<span style="letter-spacing:-1.2px">...</span></div>
<div class="t mi" style="right:1444px;top:433px;color:#1b1b1b;letter-spacing:1.1px">Shift+Ctrl+P</div>
<div class="a" style="left:113px;top:464px;width:380px;height:1px;background:#d8d8d8"></div>
<div class="t mi" style="left:149px;top:470px;color:#a3a3a3">邀請參與編輯<span style="letter-spacing:-1.2px">...</span></div>
<div class="t mi" style="left:149px;top:496px;color:#a3a3a3">共用以供審核 (Beta)<span style="letter-spacing:-1.2px">...</span></div>
<div class="a" style="left:110px;top:522px;width:387px;height:25px;background:#efefef;border-radius:5px"></div>
<div class="t mi" style="left:149px;top:522px;color:#1b1b1b">轉存(E)</div>
<svg class="a" style="left:477px;top:528px" width="8" height="12" viewBox="0 0 8 12"><path d="M1.5 1.5 L6 6 L1.5 10.5" fill="none" stroke="#333" stroke-width="1.4"/></svg>
<div class="t mi" style="left:149px;top:548px;color:#a3a3a3">轉存選取範圍<span style="letter-spacing:-1.2px">...</span></div>
<div class="a" style="left:113px;top:579px;width:380px;height:1px;background:#d8d8d8"></div>
<div class="t mi" style="left:149px;top:585px;color:#1b1b1b">封裝(G)<span style="letter-spacing:-1.2px">...</span></div>
<div class="t mi" style="right:1444px;top:585px;color:#1b1b1b;letter-spacing:1.1px">Alt+Shift+Ctrl+P</div>
<div class="t mi" style="left:149px;top:611px;color:#1b1b1b">指令檔(R)</div>
<svg class="a" style="left:477px;top:617px" width="8" height="12" viewBox="0 0 8 12"><path d="M1.5 1.5 L6 6 L1.5 10.5" fill="none" stroke="#333" stroke-width="1.4"/></svg>
<div class="a" style="left:113px;top:642px;width:380px;height:1px;background:#d8d8d8"></div>
<div class="t mi" style="left:149px;top:648px;color:#1b1b1b">文件設定(D)<span style="letter-spacing:-1.2px">...</span></div>
<div class="t mi" style="right:1444px;top:648px;color:#1b1b1b;letter-spacing:1.1px">Alt+Ctrl+P</div>
<div class="t mi" style="left:149px;top:674px;color:#1b1b1b">文件色彩模式(M)</div>
<svg class="a" style="left:477px;top:680px" width="8" height="12" viewBox="0 0 8 12"><path d="M1.5 1.5 L6 6 L1.5 10.5" fill="none" stroke="#333" stroke-width="1.4"/></svg>
<div class="t mi" style="left:149px;top:700px;color:#1b1b1b">檔案資訊(I)<span style="letter-spacing:-1.2px">...</span></div>
<div class="t mi" style="right:1444px;top:700px;color:#1b1b1b;letter-spacing:1.1px">Alt+Shift+Ctrl+I</div>
<div class="a" style="left:113px;top:731px;width:380px;height:1px;background:#d8d8d8"></div>
<div class="t mi" style="left:149px;top:737px;color:#1b1b1b">列印(P)<span style="letter-spacing:-1.2px">...</span></div>
<div class="t mi" style="right:1444px;top:737px;color:#1b1b1b;letter-spacing:1.1px">Ctrl+P</div>
<div class="a" style="left:113px;top:768px;width:380px;height:1px;background:#d8d8d8"></div>
<div class="t mi" style="left:149px;top:774px;color:#1b1b1b">結束(X)</div>
<div class="t mi" style="right:1444px;top:774px;color:#1b1b1b;letter-spacing:1.1px">Ctrl+Q</div>
<div class="a" style="left:499px;top:518px;width:378px;height:84px;background:#f9f9f9;border-radius:6px;border:1px solid #e3e3e3;box-shadow:0 9px 14px -4px rgba(0,0,0,.2),0 1px 5px rgba(0,0,0,.06)"></div>
<div class="a" style="left:505px;top:522px;width:366px;height:25px;background:#efefef;border-radius:5px"></div>
<div class="t mi" style="left:544px;top:522px;color:#1b1b1b">轉存為螢幕適用<span style="letter-spacing:-1.2px">...</span></div>
<div class="t mi" style="right:1069px;top:522px;color:#1b1b1b;letter-spacing:1.1px">Alt+Ctrl+E</div>
<div class="t mi" style="left:544px;top:548px;color:#1b1b1b">轉存為<span style="letter-spacing:-1.2px">...</span></div>
<div class="t mi" style="left:544px;top:574px;color:#1b1b1b">儲存為網頁用 (舊版)<span style="letter-spacing:-1.2px">...</span></div>
<div class="t mi" style="right:1069px;top:574px;color:#1b1b1b;letter-spacing:1.1px">Alt+Shift+Ctrl+S</div>
<svg class="a" style="left:696px;top:537px" width="18" height="26" viewBox="0 0 18 26"><path d="M1 1 L1 20 L5.5 15.5 L9 23.5 L12 22 L8.5 14.5 L15 14.5 Z" fill="#fff" stroke="#000" stroke-width="1.3" stroke-linejoin="round"/></svg>

<!-- ===== ANNOTATIONS ===== -->
<svg class="a" style="left:0;top:0" width="1917" height="1019" viewBox="0 0 1917 1019">
<g fill="none" stroke="#ff0000" stroke-width="3">
<rect x="96.5" y="3.5" width="75" height="29"/>
<rect x="3.5" y="360.5" width="90" height="89"/>
<rect x="121.5" y="517.5" width="210" height="35"/>
<rect x="500.5" y="518.5" width="187" height="32"/>
<rect x="1557.5" y="83.5" width="356" height="216"/>
<rect x="1557.5" y="512.5" width="358" height="106"/>
</g>
<g stroke="#ff0000" stroke-width="3" fill="#ff0000">
<line x1="171.3" y1="48.5" x2="203.2" y2="494"/>
<polygon points="204.3,509 194.1,492.2 212.2,491" stroke="none"/>
<line x1="598" y1="201" x2="112" y2="357.6"/>
<polygon points="97.1,362.2 110.5,348.8 116.3,365.5" stroke="none"/>
<line x1="340" y1="535.5" x2="480" y2="535.5"/>
<polygon points="496,535.5 477,525.5 477,545.5" stroke="none"/>
</g>
</svg>
<div class="t an" style="left:202px;top:26px">(4) 準備出圖</div>
<div class="t an" style="left:608px;top:166px">(3) 外框轉換成填色</div>
<div class="t an" style="left:1608px;top:316px">(2) 選取圖層2</div>
<div class="t an" style="left:1680px;top:380px">所有物件</div>
<div class="t an" style="left:1622px;top:631px">(1)</div>

</body></html>
